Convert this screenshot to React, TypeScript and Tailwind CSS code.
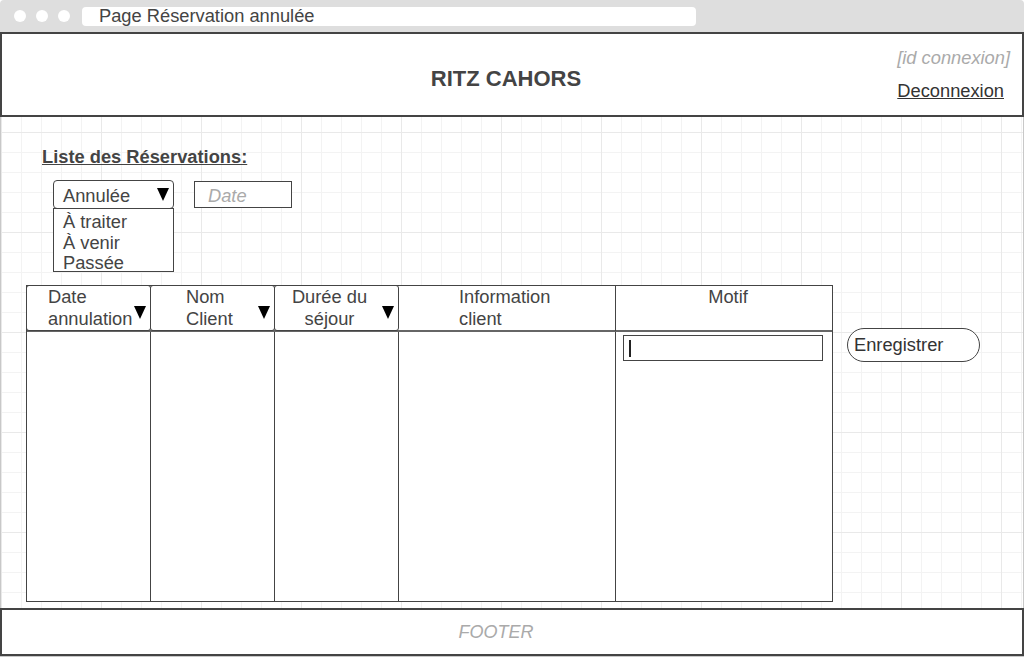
import React from "react";

function Arrow({ className = "" }: { className?: string }) {
  return (
    <svg width="12" height="13" viewBox="0 0 12 13" className={className}>
      <polygon points="0,0 12,0 6,13" fill="#000" />
    </svg>
  );
}

export default function App() {
  return (
    <div className="w-[1024px] h-[657px] flex flex-col overflow-hidden font-['Liberation_Sans',Arial,sans-serif] text-[#444] bg-white">
      {/* Title bar */}
      <div className="h-[32px] shrink-0 bg-[#dedede] flex items-center pl-[14px] gap-[10px] rounded-t-[4px]">
        <span className="w-[12px] h-[12px] rounded-full bg-white" />
        <span className="w-[12px] h-[12px] rounded-full bg-white" />
        <span className="w-[12px] h-[12px] rounded-full bg-white" />
        <div className="ml-[2px] w-[614px] h-[19px] bg-white rounded-[4px] flex items-center pl-[17px] text-[18.3px] leading-[18px] text-[#444]">
          Page Réservation annulée
        </div>
      </div>

      {/* Page with grid */}
      <div className="flex-1 flex flex-col border-x border-b border-[#c8c8c8] bg-[linear-gradient(#e9e9e9_1px,transparent_1px),linear-gradient(90deg,#e9e9e9_1px,transparent_1px),linear-gradient(#f3f3f3_1px,transparent_1px),linear-gradient(90deg,#f3f3f3_1px,transparent_1px)] bg-[size:100px_100px,100px_100px,20px_20px,20px_20px]">
        {/* Header */}
        <header className="h-[85px] shrink-0 -mx-px border-2 border-[#444] bg-white grid grid-cols-[1fr_auto_1fr] items-center">
          <div />
          <div className="text-[22px] font-bold text-[#444] pt-[7px] mr-[12px]">RITZ CAHORS</div>
          <div className="flex flex-col items-end pr-[12px] text-[18.3px] leading-[20px]">
            <span className="italic text-[#aaa]">[id connexion]</span>
            <span className="underline text-[#333] mr-[6px] mt-[13px]">Deconnexion</span>
          </div>
        </header>

        {/* Main */}
        <main className="flex-1 flex items-start pl-[25px] pt-[30px]">
          <div className="flex flex-col">
            <h2 className="ml-[16px] text-[18.3px] leading-[20px] font-bold underline text-[#444]">
              Liste des Réservations:
            </h2>

            <div className="flex items-start mt-[13px] ml-[27px]">
              <div className="w-[121px] flex flex-col">
                <div className="h-[29px] border border-[#444] rounded-[4px] bg-white flex items-center justify-between pl-[9px] pr-[4px] pt-[2px] text-[18.3px]">
                  <span>Annulée</span>
                  <Arrow className="-mt-[2px]" />
                </div>
                <div className="h-[64px] -mt-px border border-[#444] bg-white flex flex-col pl-[9px] pt-[3px] text-[18.3px] leading-[20.5px]">
                  <span>À traiter</span>
                  <span>À venir</span>
                  <span>Passée</span>
                </div>
              </div>
              <div className="ml-[20px] mt-[1px] w-[98px] h-[27px] border border-[#444] bg-white flex items-center pl-[13px] pt-[2px] text-[18.3px] italic text-[#aaa]">
                Date
              </div>
            </div>

            <div className="flex items-start mt-[13px]">
              {/* Table */}
              <div className="w-[807px] h-[317px] border border-[#444] bg-white flex flex-col">
                <div className="h-[46px] shrink-0 grid grid-cols-[124px_124px_124px_217px_1fr] border-b-2 border-[#666] text-[18.3px] leading-[22px]">
                  <div className="border border-[#444] -ml-px -mt-px rounded-[3px] flex items-start">
                    <div className="flex-1 pl-[21px]">Date<br />annulation</div>
                    <Arrow className="mt-[20px] mr-[4px]" />
                  </div>
                  <div className="border border-[#444] -ml-px -mt-px rounded-[3px] flex items-start">
                    <div className="flex-1 pl-[35px]">Nom<br />Client</div>
                    <Arrow className="mt-[20px] mr-[4px]" />
                  </div>
                  <div className="border border-[#444] -ml-px -mt-px rounded-[3px] flex items-start">
                    <div className="flex-1 text-center pl-[2px]">Durée du<br />séjour</div>
                    <Arrow className="mt-[20px] mr-[4px]" />
                  </div>
                  <div className="border-r border-[#444] pl-[60px]">
                    Information<br />client
                  </div>
                  <div className="flex justify-center pl-[8px]">
                    <div>Motif</div>
                  </div>
                </div>
                <div className="flex-1 grid grid-cols-[124px_124px_124px_217px_1fr]">
                  <div className="border-r border-[#444]" />
                  <div className="border-r border-[#444]" />
                  <div className="border-r border-[#444]" />
                  <div className="border-r border-[#444]" />
                  <div className="pl-[7px] pr-[9px] pt-[3px]">
                    <div className="h-[26px] border border-[#444] bg-white flex items-center pl-[5px]">
                      <span className="w-[2px] h-[17px] bg-[#222]" />
                    </div>
                  </div>
                </div>
              </div>

              <button className="ml-[14px] mt-[43px] w-[133px] h-[34px] border border-[#444] rounded-full bg-white text-left pl-[6px] text-[18.3px] text-[#333]">
                Enregistrer
              </button>
            </div>
          </div>
        </main>

        {/* Footer */}
        <footer className="h-[48px] shrink-0 -mx-px border-2 border-[#444] bg-white flex items-center justify-center pr-[32px] text-[18px] italic text-[#aaa]">
          FOOTER
        </footer>
      </div>
    </div>
  );
}
